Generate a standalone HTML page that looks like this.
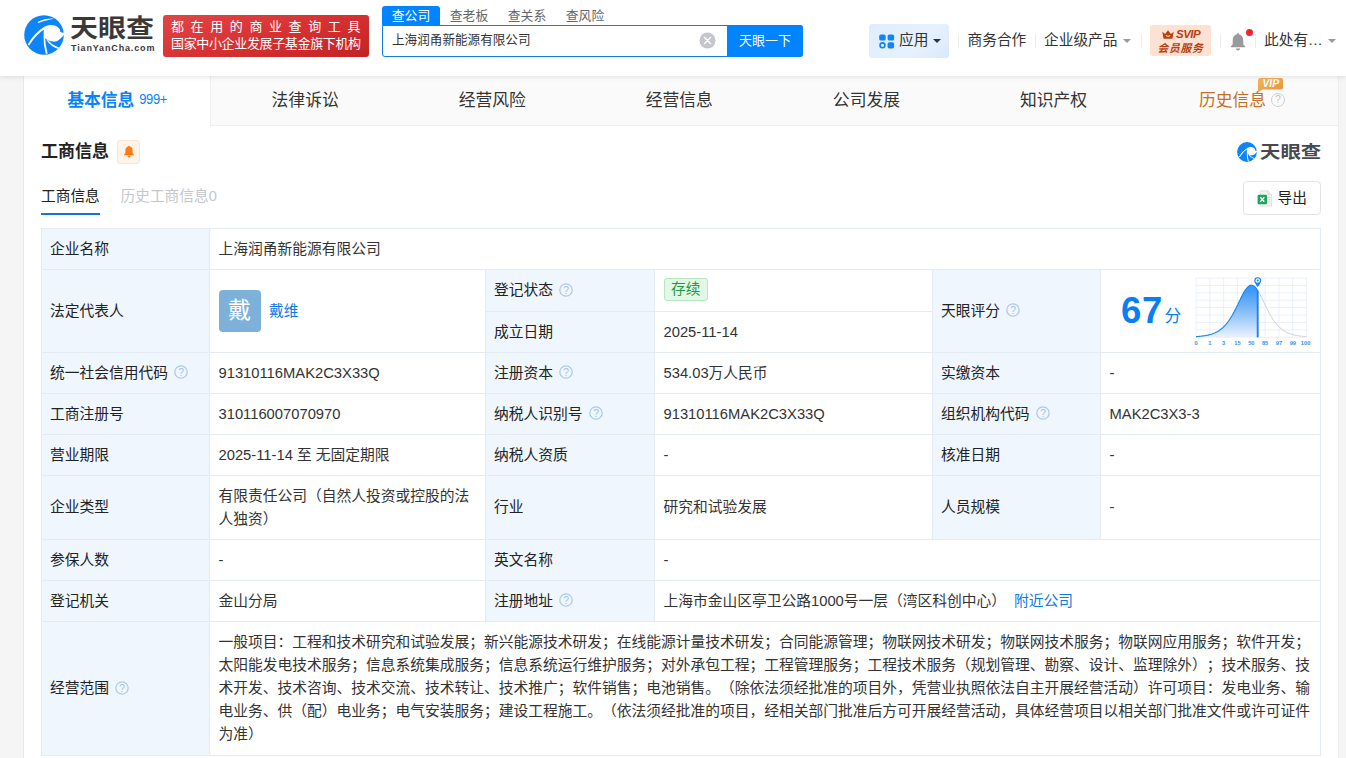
<!DOCTYPE html>
<html lang="zh-CN">
<head>
<meta charset="utf-8">
<title>上海润甬新能源有限公司 - 天眼查</title>
<style>
*{box-sizing:border-box;margin:0;padding:0}
html,body{width:1346px;height:758px;overflow:hidden}
body{text-spacing-trim:space-all;background:#f5f5f5;font-family:"Liberation Sans","Noto Sans CJK SC",sans-serif;color:#333;font-size:15px;position:relative}
a{text-decoration:none;color:inherit}
.abs{position:absolute}
/* ---------- header ---------- */
#hd{position:absolute;left:0;top:0;width:1346px;height:76px;background:#fff;box-shadow:0 1px 5px rgba(0,0,0,.10);z-index:5}
#logo-ic{position:absolute;left:24px;top:15px;width:40px;height:40px}
#logo-cn{position:absolute;left:69.5px;top:9px;font-size:24.7px;line-height:40px;font-weight:700;color:#3b3838;letter-spacing:0;white-space:nowrap;transform:scale(1.135,1);transform-origin:0 50%}
#logo-en{position:absolute;left:71px;top:42px;font-size:9px;line-height:12px;font-weight:700;color:#3b3838;letter-spacing:.85px;white-space:nowrap}
#slogan{position:absolute;left:163px;top:15px;width:206px;height:42px;border-radius:3px;background:linear-gradient(165deg,#e34545 0%,#d73233 50%,#c42223 100%);color:#fff;font-size:13px;white-space:nowrap}
#slogan .l1{position:absolute;left:8px;top:3px;line-height:17px;letter-spacing:6.6px}
#slogan .l2{position:absolute;left:8px;top:20.400px;line-height:17px;letter-spacing:-.35px}
#stabs{position:absolute;left:382px;top:6px;height:19px;font-size:12.8px;line-height:19px;color:#666;white-space:nowrap}
#stabs span{position:absolute;top:0;width:58px;height:19px;text-align:center}
#stabs .on{background:#0084ff;color:#fff;border-radius:3px 3px 0 0}
#sbox{position:absolute;left:382px;top:25px;width:421px;height:32px;border:1px solid #107ee6;border-radius:0 3px 3px 3px;background:#fff}
#sbox .qt{position:absolute;left:9px;top:0;line-height:29px;font-size:12.6px;color:#333;white-space:nowrap}
#sbox .x{position:absolute;left:316px;top:6px;width:17px;height:17px}
#sbtn{position:absolute;left:727px;top:25px;width:76px;height:32px;background:#0084ff;color:#fff;border-radius:0 3px 3px 0;text-align:center;line-height:31px;font-size:13px}
.hn{position:absolute;top:25px;height:32px;line-height:31px;font-size:14.7px;color:#333;white-space:nowrap}
.hdv{position:absolute;top:34px;width:1px;height:14px;background:#ececec}
.car{position:absolute;width:0;height:0;border-left:4.2px solid transparent;border-right:4.2px solid transparent;border-top:4.6px solid #9a9a9a}
#app{position:absolute;left:869px;top:24px;width:80px;height:34px;border-radius:3px;background:linear-gradient(135deg,#deedfd 0%,#e6f1fd 60%,#d9e9fb 100%)}
#svip{position:absolute;left:1150px;top:25px;width:61px;height:31px;border-radius:3px;background:#fde2d4;color:#b8400e;text-align:center;font-weight:700}
/* ---------- nav ---------- */
#wrap{position:absolute;left:24px;top:76px;width:1315px;height:690px;background:#fff}
#nav{position:absolute;left:0;top:0;width:1314.5px;height:50px;background:#fafafa;border-bottom:1px solid #eee}
#nav .t{position:absolute;top:0;height:50px;text-align:center;line-height:50px;font-size:16.8px;color:#333;white-space:nowrap}
#nav .t.on{background:#fff;border-right:1px solid #eee;color:#0884fa;font-weight:700;height:51px}
#nav .t.on small{display:inline-block;font-weight:400;font-size:13px;line-height:16px;letter-spacing:-.45px;margin-left:5px;position:relative;top:-3.5px;transform:scaleY(1.16)}

#wm-cn{left:1235.5px;top:62.5px;font-size:17px;line-height:27px;font-weight:700;color:#47494f;white-space:nowrap;transform:scale(1.2,1);transform-origin:0 50%}
#tb{position:absolute;left:17px;top:152px;width:1280px;border-collapse:collapse;table-layout:fixed;font-size:14.75px;line-height:23px;color:#333}
#tb td{border:1px solid #e4ebf3;padding:0 9px 0 8.5px;vertical-align:middle;position:relative;word-break:break-all}
#tb td.l{background:#eff6fd;color:#222;white-space:nowrap;padding-left:8px}
.q{display:inline-block;margin-left:2px;position:relative;top:1.5px;overflow:visible}
.av{display:block;width:42px;height:42px;border-radius:4px;background:#7eb1d9;color:#fff;font-size:23px;line-height:40px;text-align:center}
.lk{color:#0c7ae8}
#tb tr.nw td{white-space:nowrap}
.tag{display:inline-block;position:relative;top:-1px;height:23px;line-height:21px;padding:0 6.5px;border:1px solid #b5e6c1;border-radius:3px;background:#e2f8e7;color:#1c9a3f;font-size:14.7px;vertical-align:middle}
</style>
</head>
<body>
<div id="hd">
  <svg id="logo-ic" viewBox="0 0 40 40">
    <circle cx="20" cy="20" r="19.8" fill="#0d84f7"/>
    <path fill="#fff" d="M20.7 11.9C24.5 9.3 31.5 9.2 35 13.2C36.3 14.8 36.4 16 36 16.8C37 17.4 38.8 17.8 40.5 17.8L40.5 19C37.5 23 33.5 27.2 29 26.6C25 26.3 21.3 24.5 20 21.3C19.3 18 19.6 14.5 20.7 11.9Z"/>
    <path fill="#fff" d="M21.1 11.3Q10.3 17.8 3.8 29.4L5.1 30.5Q11.7 19.9 21.8 13.3Z"/>
    <path fill="#fff" d="M19.5 20.5Q19.2 30 21.9 39.1L23.6 38.6Q21.2 30 21.1 21.5Z"/>
    <path fill="#fff" d="M22.4 25.1Q27 31.9 34.1 34L35.2 32.5Q28.7 30.5 24.3 25.6Z"/>
    <path fill="#fff" d="M13.6 7Q21 3.2 30.6 3.6Q22 5.4 14.2 8Z"/>
  </svg>
  <div id="logo-cn">天眼查</div>
  <div id="logo-en">TianYanCha.com</div>
  <div id="slogan"><div class="l1">都在用的商业查询工具</div><div class="l2">国家中小企业发展子基金旗下机构</div></div>

  <div id="stabs"><span class="on" style="left:0">查公司</span><span style="left:58px">查老板</span><span style="left:116px">查关系</span><span style="left:174px">查风险</span></div>
  <div id="sbox"><div class="qt">上海润甬新能源有限公司</div>
    <svg class="x" viewBox="0 0 17 17"><circle cx="8.5" cy="8.5" r="8" fill="#c4c6cc"/><path d="M5.300 5.300L11.700 11.700M11.700 5.300L5.300 11.700" stroke="#fff" stroke-width="1.250" stroke-linecap="round"/></svg>
  </div>
  <div id="sbtn">天眼一下</div>

  <div id="app"></div>
  <svg class="abs" style="left:878.5px;top:34px" width="16" height="15" viewBox="0 0 16 15">
    <rect x="0.2" y="0.4" width="6.5" height="6.2" rx="1.7" fill="#1283f8"/>
    <rect x="8.600" y="0.400" width="6.500" height="6.200" rx="1.700" fill="#1283f8"/>
    <rect x="8.600" y="8.200" width="6.500" height="6.200" rx="1.700" fill="#1283f8"/>
    <circle cx="3.450" cy="11.300" r="2.450" fill="none" stroke="#1283f8" stroke-width="1.600"/>
  </svg>
  <div class="hn" style="left:899px">应用</div>
  <div class="car" style="left:933px;top:39px;border-top-color:#333"></div>
  <div class="hdv" style="left:958px"></div>
  <div class="hn" style="left:967.5px">商务合作</div>
  <div class="hdv" style="left:1035px"></div>
  <div class="hn" style="left:1044px">企业级产品</div>
  <div class="car" style="left:1122.500px;top:38.500px"></div>
  <div class="hdv" style="left:1141px"></div>
  <div id="svip">
    <svg class="abs" style="left:12px;top:5px" width="12" height="9" viewBox="0 0 12 9"><path d="M0.300 1.800L3.100 3.900L6 0.300L8.900 3.900L11.700 1.800L10.400 8.700L1.600 8.700Z" fill="#b8400e"/><path d="M3.900 5.400Q6 7.200 8.100 5.400" stroke="#fde2d4" stroke-width="1.100" fill="none"/></svg>
    <div class="abs" style="left:26px;top:3px;font-size:11.500px;line-height:13px;font-style:italic;letter-spacing:-.5px">SVIP</div>
    <div class="abs" style="left:0;top:17px;width:61px;font-size:10.800px;line-height:13px;letter-spacing:.7px;font-style:italic">会员服务</div>
  </div>
  <div class="hdv" style="left:1220px"></div>
  <svg class="abs" style="left:1229px;top:32px" width="18" height="20" viewBox="0 0 18 20">
    <path d="M9 1.2C9.8 1.2 10.3 1.7 10.3 2.5C13 3.2 14.3 5.4 14.3 8.2L14.3 12.2L16.2 14.4L16.2 15.3L1.8 15.3L1.8 14.4L3.7 12.2L3.7 8.2C3.7 5.4 5 3.2 7.7 2.5C7.7 1.7 8.2 1.2 9 1.2Z" fill="#9a9a9a"/>
    <path d="M6.8 16.6L11.2 16.6C11 17.8 10.1 18.5 9 18.5C7.9 18.5 7 17.8 6.8 16.6Z" fill="#9a9a9a"/>
  </svg>
  <div class="abs" style="left:1246px;top:29px;width:7px;height:7px;border-radius:50%;background:#f5222d"></div>
  <div class="hdv" style="left:1255px"></div>
  <div class="hn" style="left:1264px">此处有…</div>
  <div class="car" style="left:1327.500px;top:38.500px"></div>
</div>

<div id="wrap">
  <div class="abs" style="left:-1px;top:0;width:1px;height:690px;background:#e9e9e9;z-index:3"></div>
  <div class="abs" style="left:1314px;top:0;width:1px;height:690px;background:#ececec;z-index:3"></div>
  <div id="nav">
    <div class="t on" style="left:0;width:187px">基本信息<small>999+</small></div>
    <div class="t" style="left:187.6px;width:187.1px">法律诉讼</div>
    <div class="t" style="left:374.7px;width:187.1px">经营风险</div>
    <div class="t" style="left:561.8px;width:187.1px">经营信息</div>
    <div class="t" style="left:748.9px;width:187.1px">公司发展</div>
    <div class="t" style="left:936px;width:187.1px">知识产权</div>
    <div class="t" style="left:1126px;width:188px;color:#c87022;text-align:left;padding-left:49px">历史信息</div>
    <div class="abs" style="left:1247px;top:17px;width:14px;height:14px;border:1.2px solid #cfcfcf;border-radius:50%;font-size:10.5px;line-height:11.5px;text-align:center;color:#c4c4c4;font-family:'Liberation Sans',sans-serif">?</div>
    <svg class="abs" style="left:1233px;top:2px;overflow:visible" width="27" height="15" viewBox="0 0 27 15">
      <defs><linearGradient id="vg" x1="0" y1="0" x2="1" y2="1"><stop offset="0" stop-color="#f5b45a"/><stop offset="1" stop-color="#e8923a"/></linearGradient></defs>
      <path d="M3 0H24A2 2 0 0 1 26 2V9.500A2 2 0 0 1 24 11.500H5.500L1 14.500V2A2 2 0 0 1 3 0Z" fill="url(#vg)"/>
      <text x="13.800" y="9.400" text-anchor="middle" font-family="Liberation Sans, sans-serif" font-size="10.300" font-weight="700" font-style="italic" fill="#fff">VIP</text>
    </svg>
  </div>

  <div class="abs" style="left:17px;top:63px;font-size:17px;line-height:25px;font-weight:700;color:#222">工商信息</div>
  <div class="abs" style="left:93px;top:64px;width:23px;height:24px;border:1px solid #fde4cc;border-radius:3px;background:#fff4e9">
    <svg class="abs" style="left:4.7px;top:4.2px" width="12" height="13.100" viewBox="0 0 11 12"><path d="M5.5 0.6C6 0.6 6.3 0.9 6.3 1.4C8 1.9 8.8 3.3 8.8 5L8.800 7.400L10 8.800L10 9.400L1 9.400L1 8.800L2.200 7.400L2.200 5C2.200 3.300 3 1.900 4.700 1.400C4.700 0.900 5 0.600 5.500 0.600Z" fill="#ff7a0f"/><path d="M4.200 10.100L6.800 10.100C6.700 10.900 6.200 11.400 5.500 11.400C4.800 11.400 4.300 10.900 4.200 10.100Z" fill="#ff7a0f"/></svg>
  </div>
  <svg class="abs" style="left:1213px;top:65.5px" width="20" height="20" viewBox="0 0 40 40">
    <circle cx="20" cy="20" r="19.8" fill="#0d84f7"/>
    <path fill="#fff" d="M20.700 11.900C24.500 9.300 31.500 9.200 35 13.200C36.300 14.800 36.400 16 36 16.800C37 17.400 38.800 17.800 40.500 17.800L40.500 19C37.500 23 33.500 27.200 29 26.600C25 26.300 21.300 24.500 20 21.300C19.300 18 19.600 14.500 20.700 11.900Z"/>
    <path fill="#fff" d="M21.100 11.300Q10.500 18 3.800 29.600L5.300 30.600Q11.700 19.900 21.700 13.200Z"/>
    <path fill="#fff" d="M19.500 20.500Q19.200 30 21.800 39.100L23.700 38.600Q21.300 30 21.200 21.500Z"/>
    <path fill="#fff" d="M22.400 25.100Q27 31.900 34.100 34L35.200 32.400Q28.700 30.500 24.300 25.600Z"/>
  </svg>
  <div class="abs" id="wm-cn">天眼查</div>

  <div class="abs" style="left:17px;top:109px;font-size:14.7px;line-height:23px;color:#222">工商信息</div>
  <div class="abs" style="left:17px;top:136.700px;width:59px;height:2.300px;background:#1874d2"></div>
  <div class="abs" style="left:96.5px;top:109px;font-size:14.7px;line-height:23px;color:#c4c7cc;white-space:nowrap">历史工商信息0</div>

  <div class="abs" style="left:1219px;top:105px;width:78px;height:34px;border:1px solid #e3e3e3;border-radius:4px;background:#fff">
    <svg class="abs" style="left:13px;top:8px" width="16" height="17" viewBox="0 0 16 17">
      <path d="M3.5 0.800L10.700 0.800L14.500 4.600L14.500 16L3.500 16Z" fill="#f4f4f4" stroke="#dcdcdc" stroke-width="0.8"/>
      <path d="M10.700 0.800L10.700 4.600L14.500 4.600" fill="#e9e9e9" stroke="#dcdcdc" stroke-width="0.8"/>
      <path d="M11 7.500H13.200M11 9.700H13.200M11 11.900H13.200" stroke="#cfcfcf" stroke-width="0.9"/>
      <rect x="0.600" y="4.800" width="9.400" height="9.400" rx="1" fill="#1fa45b"/>
      <path d="M3.300 7.200L7.300 11.800M7.300 7.200L3.300 11.800" stroke="#fff" stroke-width="1.300"/>
    </svg>
    <div class="abs" style="left:33.500px;top:0;line-height:32px;font-size:14.700px;color:#222;white-space:nowrap">导出</div>
  </div>

  <table id="tb">
    <colgroup><col style="width:168px"><col style="width:276px"><col style="width:169px"><col style="width:278px"><col style="width:168px"><col style="width:220px"></colgroup>
    <tr style="height:41px"><td class="l">企业名称</td><td colspan="5">上海润甬新能源有限公司</td></tr>
    <tr style="height:42px"><td class="l" rowspan="2">法定代表人</td><td rowspan="2"><span class="av">戴</span><a class="lk" style="position:absolute;left:59px;top:30px">戴维</a></td><td class="l">登记状态 <svg class="q" width="14" height="14" viewBox="0 0 14 14"><circle cx="7" cy="7" r="6.2" fill="none" stroke="#adc9e8" stroke-width="1.25"/><text x="7" y="10.6" text-anchor="middle" font-family="Liberation Sans, sans-serif" font-size="10.3" fill="#a3c2e6">?</text></svg></td><td><span class="tag">存续</span></td><td class="l" rowspan="2">天眼评分 <svg class="q" width="14" height="14" viewBox="0 0 14 14"><circle cx="7" cy="7" r="6.2" fill="none" stroke="#adc9e8" stroke-width="1.25"/><text x="7" y="10.6" text-anchor="middle" font-family="Liberation Sans, sans-serif" font-size="10.3" fill="#a3c2e6">?</text></svg></td><td rowspan="2"></td></tr>
    <tr style="height:41px"><td class="l">成立日期</td><td>2025-11-14</td></tr>
    <tr style="height:41px"><td class="l">统一社会信用代码 <svg class="q" width="14" height="14" viewBox="0 0 14 14"><circle cx="7" cy="7" r="6.2" fill="none" stroke="#adc9e8" stroke-width="1.25"/><text x="7" y="10.6" text-anchor="middle" font-family="Liberation Sans, sans-serif" font-size="10.3" fill="#a3c2e6">?</text></svg></td><td>91310116MAK2C3X33Q</td><td class="l">注册资本 <svg class="q" width="14" height="14" viewBox="0 0 14 14"><circle cx="7" cy="7" r="6.2" fill="none" stroke="#adc9e8" stroke-width="1.25"/><text x="7" y="10.6" text-anchor="middle" font-family="Liberation Sans, sans-serif" font-size="10.3" fill="#a3c2e6">?</text></svg></td><td>534.03万人民币</td><td class="l">实缴资本</td><td>-</td></tr>
    <tr style="height:41px"><td class="l">工商注册号</td><td>310116007070970</td><td class="l">纳税人识别号 <svg class="q" width="14" height="14" viewBox="0 0 14 14"><circle cx="7" cy="7" r="6.2" fill="none" stroke="#adc9e8" stroke-width="1.25"/><text x="7" y="10.6" text-anchor="middle" font-family="Liberation Sans, sans-serif" font-size="10.3" fill="#a3c2e6">?</text></svg></td><td>91310116MAK2C3X33Q</td><td class="l">组织机构代码 <svg class="q" width="14" height="14" viewBox="0 0 14 14"><circle cx="7" cy="7" r="6.2" fill="none" stroke="#adc9e8" stroke-width="1.25"/><text x="7" y="10.6" text-anchor="middle" font-family="Liberation Sans, sans-serif" font-size="10.3" fill="#a3c2e6">?</text></svg></td><td>MAK2C3X3-3</td></tr>
    <tr style="height:41px"><td class="l">营业期限</td><td>2025-11-14 至 无固定期限</td><td class="l">纳税人资质</td><td>-</td><td class="l">核准日期</td><td>-</td></tr>
    <tr style="height:64px"><td class="l">企业类型</td><td style="white-space:nowrap">有限责任公司（自然人投资或控股的法<br>人独资）</td><td class="l">行业</td><td>研究和试验发展</td><td class="l">人员规模</td><td>-</td></tr>
    <tr style="height:41px"><td class="l">参保人数</td><td>-</td><td class="l">英文名称</td><td colspan="3">-</td></tr>
    <tr style="height:41px"><td class="l">登记机关</td><td>金山分局</td><td class="l">注册地址 <svg class="q" width="14" height="14" viewBox="0 0 14 14"><circle cx="7" cy="7" r="6.2" fill="none" stroke="#adc9e8" stroke-width="1.25"/><text x="7" y="10.6" text-anchor="middle" font-family="Liberation Sans, sans-serif" font-size="10.3" fill="#a3c2e6">?</text></svg></td><td colspan="3">上海市金山区亭卫公路1000号一层（湾区科创中心）<a class="lk" style="margin-left:8px">附近公司</a></td></tr>
    <tr style="height:134px" class="nw"><td class="l">经营范围 <svg class="q" width="14" height="14" viewBox="0 0 14 14"><circle cx="7" cy="7" r="6.2" fill="none" stroke="#adc9e8" stroke-width="1.25"/><text x="7" y="10.6" text-anchor="middle" font-family="Liberation Sans, sans-serif" font-size="10.3" fill="#a3c2e6">?</text></svg></td><td colspan="5">一般项目：工程和技术研究和试验发展；新兴能源技术研发；在线能源计量技术研发；合同能源管理；物联网技术研发；物联网技术服务；物联网应用服务；软件开发；<br>太阳能发电技术服务；信息系统集成服务；信息系统运行维护服务；对外承包工程；工程管理服务；工程技术服务（规划管理、勘察、设计、监理除外）；技术服务、技<br>术开发、技术咨询、技术交流、技术转让、技术推广；软件销售；电池销售。（除依法须经批准的项目外，凭营业执照依法自主开展经营活动）许可项目：发电业务、输<br>电业务、供（配）电业务；电气安装服务；建设工程施工。（依法须经批准的项目，经相关部门批准后方可开展经营活动，具体经营项目以相关部门批准文件或许可证件<br>为准）</td></tr>
  </table>
  <div class="abs" style="left:1097px;top:214.700px;font-size:36.500px;line-height:40px;font-weight:700;color:#0a7ff5;letter-spacing:.8px;font-family:'Liberation Sans',sans-serif">67</div>
  <div class="abs" style="left:1140.500px;top:231.300px;font-size:16.800px;line-height:20px;color:#0a7ff5">分</div>
  <svg class="abs" style="left:1165.2px;top:194.700px;overflow:visible" width="126" height="76" viewBox="-7 -7 126 76">
      <defs><linearGradient id="cg" x1="0" y1="0" x2="0" y2="1"><stop offset="0.1" stop-color="#3d99f6"/><stop offset="0.5" stop-color="#86bdf8"/><stop offset="1" stop-color="#e9f3fd"/></linearGradient></defs>
      <path d="M0.00 0V59.3M13.82 0V59.3M27.65 0V59.3M41.47 0V59.3M55.30 0V59.3M69.12 0V59.3M82.95 0V59.3M96.77 0V59.3M110.60 0V59.3M0 0.00H110.6M0 7.41H110.6M0 14.82H110.6M0 22.24H110.6M0 29.65H110.6M0 37.06H110.6M0 44.47H110.6M0 51.89H110.6M0 59.30H110.6" stroke="#e4ecf8" stroke-width="0.8" fill="none"/>
      <path d="M0.0 58.7L0.8 58.6L1.6 58.5L2.4 58.5L3.2 58.4L4.0 58.3L4.8 58.2L5.6 58.1L6.4 58.0L7.2 57.9L8.0 57.8L8.8 57.7L9.6 57.6L10.4 57.4L11.2 57.2L12.0 57.1L12.8 56.9L13.6 56.7L14.4 56.5L15.2 56.2L16.0 56.0L16.8 55.7L17.6 55.4L18.4 55.0L19.2 54.7L20.0 54.3L20.8 53.9L21.6 53.5L22.4 53.0L23.2 52.5L24.0 51.9L24.8 51.3L25.6 50.7L26.4 50.0L27.2 49.3L28.0 48.5L28.8 47.7L29.6 46.8L30.4 45.9L31.2 44.9L32.0 43.8L32.8 42.7L33.6 41.6L34.4 40.3L35.2 39.0L36.0 37.7L36.8 36.3L37.6 34.8L38.4 33.3L39.2 31.7L40.0 30.2L40.8 28.5L41.6 26.9L42.4 25.2L43.2 23.5L44.0 21.9L44.8 20.2L45.6 18.6L46.4 17.1L47.2 15.6L48.0 14.1L48.8 12.8L49.6 11.6L50.4 10.5L51.2 9.6L52.0 8.8L52.8 8.1L53.6 7.6L54.4 7.3L55.2 7.2L56.0 7.3L56.8 7.5L57.6 7.9L58.4 8.5L59.2 9.2L60.0 10.1L60.8 11.2L61.6 12.4L61.7 12.5L61.7 59.3L0 59.3Z" fill="url(#cg)"/>
      <path d="M61.7 12.5L62.4 13.6L63.2 15.0L64.0 16.5L64.8 18.0L65.6 19.6L66.4 21.3L67.2 22.9L68.0 24.6L68.8 26.3L69.6 27.9L70.4 29.5L71.2 31.2L72.0 32.7L72.8 34.3L73.6 35.7L74.4 37.2L75.2 38.5L76.0 39.8L76.8 41.1L77.6 42.3L78.4 43.4L79.2 44.5L80.0 45.5L80.8 46.5L81.6 47.4L82.4 48.2L83.2 49.0L84.0 49.8L84.8 50.4L85.6 51.1L86.4 51.7L87.2 52.3L88.0 52.8L88.8 53.3L89.6 53.7L90.4 54.2L91.2 54.6L92.0 54.9L92.8 55.3L93.6 55.6L94.4 55.9L95.2 56.1L96.0 56.4L96.8 56.6L97.6 56.8L98.4 57.0L99.2 57.2L100.0 57.3L100.8 57.5L101.6 57.6L102.4 57.8L103.2 57.9L104.0 58.0L104.8 58.1L105.6 58.2L106.4 58.3L107.2 58.4L108.0 58.4L108.8 58.5L109.6 58.6L110.4 58.6L110.6 58.6" fill="none" stroke="#c6cbd3" stroke-width="0.9"/>
      <path d="M0.0 58.7L0.8 58.6L1.6 58.5L2.4 58.5L3.2 58.4L4.0 58.3L4.8 58.2L5.6 58.1L6.4 58.0L7.2 57.9L8.0 57.8L8.8 57.7L9.6 57.6L10.4 57.4L11.2 57.2L12.0 57.1L12.8 56.9L13.6 56.7L14.4 56.5L15.2 56.2L16.0 56.0L16.8 55.7L17.6 55.4L18.4 55.0L19.2 54.7L20.0 54.3L20.8 53.9L21.6 53.5L22.4 53.0L23.2 52.5L24.0 51.9L24.8 51.3L25.6 50.7L26.4 50.0L27.2 49.3L28.0 48.5L28.8 47.7L29.6 46.8L30.4 45.9L31.2 44.9L32.0 43.8L32.8 42.7L33.6 41.6L34.4 40.3L35.2 39.0L36.0 37.7L36.8 36.3L37.6 34.8L38.4 33.3L39.2 31.7L40.0 30.2L40.8 28.5L41.6 26.9L42.4 25.2L43.2 23.5L44.0 21.9L44.8 20.2L45.6 18.6L46.4 17.1L47.2 15.6L48.0 14.1L48.8 12.8L49.6 11.6L50.4 10.5L51.2 9.6L52.0 8.8L52.8 8.1L53.6 7.6L54.4 7.3L55.2 7.2L56.0 7.3L56.8 7.5L57.6 7.9L58.4 8.5L59.2 9.2L60.0 10.1L60.8 11.2L61.6 12.4L61.7 12.5" fill="none" stroke="#1a82ee" stroke-width="1.1"/>
      <path d="M61.7 12.5V59.3" stroke="#2180e2" stroke-width="1.9"/>
      <path d="M61.7 9C59.7 6.600 58.300000000000004 4.700 58.300000000000004 2.600A3.400 3.400 0 0 1 65.10000000000001 2.600C65.10000000000001 4.700 63.7 6.600 61.7 9Z" fill="#1a82ee"/>
      <circle cx="61.7" cy="2.600" r="2.250" fill="#fff"/>
      <circle cx="61.7" cy="2.600" r="1" fill="#1a82ee"/>
      <g font-family="Liberation Sans, sans-serif" font-size="5.700" font-weight="700" fill="#3a8ff0"><text x="0.0" y="67.2" text-anchor="middle">0</text><text x="13.8" y="67.2" text-anchor="middle">1</text><text x="27.6" y="67.2" text-anchor="middle">3</text><text x="41.5" y="67.2" text-anchor="middle">15</text><text x="55.3" y="67.2" text-anchor="middle">50</text><text x="69.1" y="67.2" text-anchor="middle">85</text><text x="82.9" y="67.2" text-anchor="middle">97</text><text x="96.8" y="67.2" text-anchor="middle">99</text><text x="109.6" y="67.2" text-anchor="middle">100</text></g>
    </svg>

</div>
</body>
</html>
